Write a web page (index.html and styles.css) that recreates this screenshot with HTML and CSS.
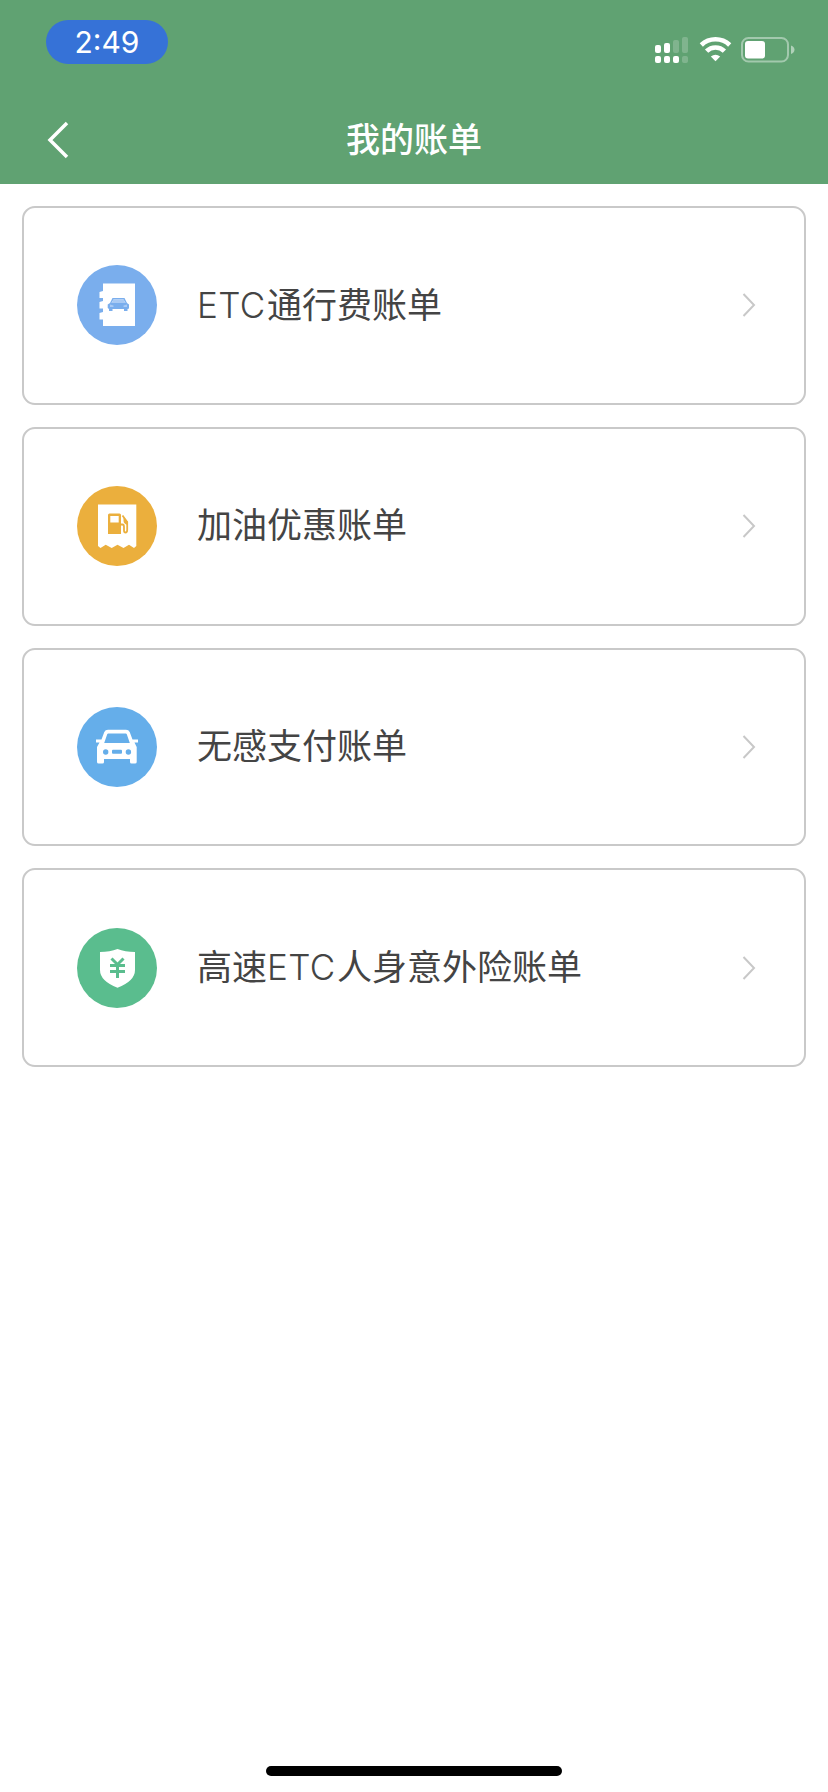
FILE: index.html
```html
<!DOCTYPE html>
<html lang="zh-CN">
<head>
<meta charset="utf-8">
<title>我的账单</title>
<link rel="stylesheet" href="styles.css">
</head>
<body>
<div class="screen">
  <header class="header">
    <div class="status">
      <span class="time">2:49</span>
      <svg class="indicators" width="142" height="30" viewBox="0 0 142 30" fill="#fff">
        <rect x="0" y="10" width="6" height="8" rx="2"/>
        <rect x="9" y="8" width="6" height="10" rx="2"/>
        <g opacity=".2"><rect x="18" y="5" width="6" height="13" rx="2"/><rect x="27" y="2" width="6" height="16" rx="2"/><rect x="27" y="21" width="6" height="7" rx="2"/></g>
        <rect x="0" y="21" width="6" height="7" rx="2"/>
        <rect x="9" y="21" width="6" height="7" rx="2"/>
        <rect x="18" y="21" width="6" height="7" rx="2"/>
        <g fill="none" stroke="#fff" stroke-width="4.6"><path d="M46.300 10 A20.500 20.500 0 0 1 74.700 10"/><path d="M51.600 16.200 A12.500 12.500 0 0 1 69.400 16.200"/></g>
        <path d="M60.500 26.200 L55.800 21.500 Q60.500 18 65.200 21.500Z"/>
        <rect x="87" y="3" width="46" height="23.500" rx="6.500" fill="none" stroke="#fff" stroke-width="2" opacity=".42"/>
        <path d="M136 10.500 Q139.500 12 139.500 14.700 Q139.500 17.500 136 19Z" opacity=".5"/>
        <rect x="90" y="6" width="20" height="17.500" rx="3"/>
      </svg>
    </div>
    <nav class="nav">
      <svg class="back" width="24" height="40" viewBox="0 0 24 40" fill="none" stroke="#fff" stroke-width="3.500"><path d="M21 3 L4 20 L21 37"/></svg>
      <h1 class="title">我的账单</h1>
    </nav>
  </header>
  <main class="list">
    <a class="card">
      <svg class="icon" viewBox="0 0 80 80">
        <circle cx="40" cy="40" r="40" fill="#7aaeed"/>
        <path fill="#fff" d="M26 18.500H58V61H26V54.500H22.500V48L26 47V43.500H22.500V37L26 36V33H22.500V27L26 26Z"/>
        <path fill="#7aaeed" fill-rule="evenodd" d="M35.500 33H47.500L50 38L52 39.500V43.500L50.500 44V46H47V44H35.500V46H32V44L30.700 43V39.500L33 38ZM36.500 34.500L34.500 38H48.500L46.500 34.500Z"/>
        <path fill="#a9caf4" d="M36.500 34.500H46.500L48.500 38H34.500ZM33 39.500L36.500 40.500V42H33ZM50 39.500L46.500 40.500V42H50Z"/>
      </svg>
      <span class="label"><span class="latin">ETC</span>通行费账单</span>
      <svg class="arrow" viewBox="0 0 14 26"><path d="M1.500 2 L12 13 L1.500 24"/></svg>
    </a>
    <a class="card">
      <svg class="icon" viewBox="0 0 80 80">
        <circle cx="40" cy="40" r="40" fill="#ebaf3d"/>
        <path fill="#fff" d="M21 18.500H59.300V60L57 62L52 58.700L46.500 62L40.500 58.700L34.700 62L28.700 58.700L23.500 62L21 60Z"/>
        <path fill="#ebaf3d" fill-rule="evenodd" d="M32.500 27.500H42.500Q44 27.500 44 29V48H31V29Q31 27.500 32.500 27.500ZM33.300 30V36.500H41.700V30Z"/>
        <path fill="none" stroke="#ebaf3d" stroke-width="1.800" d="M44 38.500H45.500Q47 38.500 47 41V44.500Q47 46.500 48.500 46.500Q50.200 46.500 50.200 44V36L45.500 29.500"/>
        <path fill="#ebaf3d" d="M46.500 31L51 36V39Q46.800 38 46.500 35Z"/>
      </svg>
      <span class="label">加油优惠账单</span>
      <svg class="arrow" viewBox="0 0 14 26"><path d="M1.500 2 L12 13 L1.500 24"/></svg>
    </a>
    <a class="card">
      <svg class="icon" viewBox="0 0 80 80">
        <circle cx="40" cy="40" r="40" fill="#65aeea"/>
        <path fill="#fff" fill-rule="evenodd" d="M31 22.800H49Q51.700 22.800 52.700 25L55.500 32.500H61V35.500H57.500L59.700 40V55Q59.700 56.500 58 56.500H54.500Q53 56.500 53 55V52H27V55Q27 56.500 25.500 56.500H21.700Q20 56.500 20 55V40L22.500 35.500H19V32.500H24.500L27.300 25Q28.300 22.800 31 22.800ZM31.300 26.500Q30.500 26.500 30.200 27.300L27.200 36H52.800L49.800 27.300Q49.500 26.500 48.700 26.500Z"/>
        <circle cx="28.700" cy="45" r="2.700" fill="#65aeea"/><circle cx="51.400" cy="45" r="2.700" fill="#65aeea"/>
        <rect x="35" y="42.800" width="10" height="4" rx="1" fill="#65aeea"/>
      </svg>
      <span class="label">无感支付账单</span>
      <svg class="arrow" viewBox="0 0 14 26"><path d="M1.500 2 L12 13 L1.500 24"/></svg>
    </a>
    <a class="card">
      <svg class="icon" viewBox="0 0 80 80">
        <circle cx="40" cy="40" r="40" fill="#5abd8e"/>
        <path fill="#fff" d="M40.500 21Q48 24 58 24V42Q58 53 40.500 59.700Q23 53 23 42V24Q33 24 40.500 21Z"/>
        <path fill="none" stroke="#5abd8e" stroke-width="3" d="M34.500 30.500L40.500 36.500L46.500 30.500M33 37.500H48M33 43.500H48M40.500 36V50"/>
      </svg>
      <span class="label">高速<span class="latin">ETC</span>人身意外险账单</span>
      <svg class="arrow" viewBox="0 0 14 26"><path d="M1.500 2 L12 13 L1.500 24"/></svg>
    </a>
  </main>
  <div class="home-bar"></div>
</div>
</body>
</html>
```
FILE: styles.css
```css
* { box-sizing: border-box; }
body { margin: 0; background: #fff; font-family: "Liberation Sans", "Noto Sans CJK SC", sans-serif; }
.screen { width: 828px; height: 1792px; display: flex; flex-direction: column; }
.header { height: 184px; background: #60a272; color: #fff; display: flex; flex-direction: column; }
.status { height: 96px; padding: 20px 31px 0 46px; display: flex; justify-content: space-between; align-items: flex-start; }
.time { width: 122px; height: 44px; border-radius: 22px; background: #3672d7; font: 400 30px/45px Inter, sans-serif; text-align: center; }
.indicators { margin-top: 15px; }
.nav { height: 88px; display: grid; grid-template-columns: 100px 1fr 100px; align-items: center; }
.back { margin-left: 46px; }
.title { margin: 0; font-size: 34px; line-height: 50px; font-weight: 500; text-align: center; }
.list { flex: 1; padding: 22px; display: flex; flex-direction: column; gap: 22px; }
.card { height: 198.800px; border: 2px solid #c9c9c9; border-radius: 13px; padding: 0 48px 0 53px; display: flex; align-items: center; }
.icon { width: 80px; height: 80px; flex: none; }
.label { flex: 1; margin-left: 40px; font-size: 35px; line-height: 52px; color: #444; }
.latin { display: inline-block; width: 70px; font-family: Inter, sans-serif; font-weight: 300; letter-spacing: 0.3px; white-space: nowrap; }
.arrow { width: 14px; height: 26px; fill: none; stroke: #c8c8c8; stroke-width: 2; }
.home-bar { width: 296px; height: 10px; border-radius: 5px; background: #000; margin: 0 auto 16px; }
```
